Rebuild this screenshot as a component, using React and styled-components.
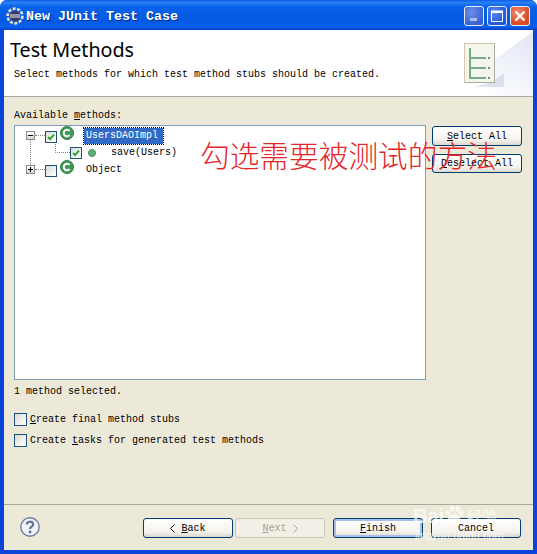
import React from 'react';
import styled, { createGlobalStyle } from 'styled-components';

const GlobalStyle = createGlobalStyle`
    html, body {
        margin: 0;
        padding: 0;
        background: #fff;
    }
`;

const Window = styled.div`
    position: relative;
    width: 537px;
    height: 554px;
    display: flex;
    flex-direction: column;
    overflow: hidden;
    box-sizing: border-box;
    padding: 0 4px 4px;
    background: #0a44d8;
    border-radius: 7px 7px 0 0;
    font-family: "Liberation Mono", monospace;
    font-size: 10px;
    color: #000;
`;

const TitleBar = styled.div`
    height: 30px;
    margin: 0 -4px;
    box-sizing: border-box;
    padding: 2px 7px 0 6px;
    flex: none;
    display: flex;
    align-items: center;
    gap: 2px;
    background: linear-gradient(180deg, #0a5be6 0%, #2a80f4 8%, #0a62ea 22%, #0458e2 70%, #0a62ee 88%, #0240cc 100%);
`;

const TitleText = styled.div`
    flex: 1;
    color: #fff;
    font-weight: bold;
    font-size: 13.33px;
    text-shadow: 1px 1px 0 #0a2a90;
`;

const WinButtons = styled.div`
    display: flex;
    gap: 3px;
`;

const WinButton = styled.div`
    width: 20px;
    height: 20px;
    box-sizing: border-box;
    border: 1px solid #e8eefc;
    border-radius: 3px;
    display: flex;
    align-items: center;
    justify-content: center;
    background: ${p => p.$close
        ? 'radial-gradient(circle at 35% 30%, #ee8a6c, #d84a24 70%)'
        : p.$dim
            ? 'radial-gradient(circle at 35% 30%, #6e8ee6, #3560d4 75%)'
            : 'radial-gradient(circle at 35% 30%, #5a88f0, #1f56dc 75%)'};
`;

const Header = styled.div`
    position: relative;
    height: 67px;
    flex: none;
    box-sizing: border-box;
    padding: 8px 6px 0;
    background: #fff;
    border-bottom: 1px solid #a8a8a4;
`;

const HeaderSwoosh = styled.svg`
    position: absolute;
    right: 0;
    top: 0;
`;

const HeaderIcon = styled.svg`
    position: absolute;
    left: 456px;
    top: 13px;
`;

const Heading = styled.div`
    font-family: "Noto Sans", sans-serif;
    font-size: 19.7px;
    line-height: 24px;
    color: #000;
`;

const Subtitle = styled.div`
    margin: 6px 0 0 4px;
    line-height: 14px;
`;

const Body = styled.div`
    flex: 1;
    display: flex;
    flex-direction: column;
    background: #ece9d8;
    min-height: 0;
`;

const MainArea = styled.div`
    flex: 1;
    padding: 12px 11px 0 10px;
    display: flex;
    flex-direction: column;
`;

const FieldLabel = styled.div`
    height: 16px;
    line-height: 14px;
`;

const MethodsRow = styled.div`
    display: flex;
    gap: 6px;
`;

const TreeBox = styled.div`
    width: 412px;
    height: 255px;
    box-sizing: border-box;
    padding: 1px 0 0 11px;
    background: #fff;
    border: 1px solid #7f9db9;
`;

const TreeRow = styled.div`
    display: flex;
    align-items: center;
    height: 17px;
`;

const TreeLines = styled.svg`
    flex: none;
    display: block;
    overflow: visible;
`;

const Expander = styled.div`
    flex: none;
    position: relative;
    width: 9px;
    height: 9px;
    box-sizing: border-box;
    border: 1px solid #8c8c84;
    background: linear-gradient(180deg, #fff, #d8d4c8);
    &::before {
        content: '';
        position: absolute;
        left: 1px;
        right: 1px;
        top: 3px;
        height: 1px;
        background: #000;
    }
    &::after {
        content: '';
        display: ${p => (p.$plus ? 'block' : 'none')};
        position: absolute;
        top: 1px;
        bottom: 1px;
        left: 3px;
        width: 1px;
        background: #000;
    }
`;

const Dots = styled.div`
    flex: none;
    width: ${p => p.$w}px;
    border-top: 1px dotted #808080;
`;

const Check = styled.div`
    flex: none;
    width: ${p => p.$size || 12}px;
    height: ${p => p.$size || 12}px;
    margin-top: ${p => p.$top || 0}px;
    margin-right: ${p => p.$after || 0}px;
    box-sizing: border-box;
    border: 1px solid #1c5180;
    background: linear-gradient(135deg, #dcdcd4, #fff);
    display: flex;
    align-items: center;
    justify-content: center;
`;

const ClassGlyph = styled.svg`
    flex: none;
    margin-top: -5px;
`;

const MethodGlyph = styled.svg`
    flex: none;
`;

const NodeLabel = styled.span`
    margin-left: ${p => p.$gap}px;
    padding: 2px 5px 2px 2px;
    line-height: 12px;
    white-space: nowrap;
    color: ${p => (p.$selected ? '#fff' : '#000')};
    background: ${p => (p.$selected ? '#316ac5' : 'transparent')};
    outline: ${p => (p.$selected ? '1px dotted #000' : 'none')};
`;

const SideButtons = styled.div`
    display: flex;
    flex-direction: column;
    gap: 8px;
    padding-top: 1px;
`;

const Button = styled.div`
    width: 90px;
    height: ${p => p.$h || 20}px;
    box-sizing: border-box;
    display: flex;
    align-items: center;
    justify-content: center;
    gap: 6px;
    border-radius: 3px;
    border: 1px solid ${p => (p.$disabled ? '#c9c7ba' : '#003c74')};
    color: ${p => (p.$disabled ? '#a1a192' : '#000')};
    background: ${p => (p.$disabled ? '#f2f0e6' : 'linear-gradient(180deg, #fff 0%, #f4f3ee 70%, #dcd8ce 100%)')};
    box-shadow: ${p => (p.$default ? 'inset 0 0 0 2px #a8bde8' : 'none')};
`;

const StatusText = styled.div`
    margin-top: 5px;
    line-height: 14px;
`;

const Options = styled.div`
    margin-top: 14px;
    display: flex;
    flex-direction: column;
    gap: 8px;
`;

const Option = styled.label`
    display: flex;
    align-items: center;
    gap: 3px;
    height: 13px;
`;

const Footer = styled.div`
    flex: none;
    height: 46px;
    box-sizing: border-box;
    border-top: 1px solid #aca899;
    padding: 13px 12px 0 16px;
    display: flex;
    align-items: flex-start;
`;

const HelpIcon = styled.svg`
    flex: none;
    display: block;
    margin-top: -1px;
`;

const NavButtons = styled.div`
    margin-left: 103px;
    display: flex;
    gap: 2px;
`;

const LastButtons = styled.div`
    margin-left: 8px;
    display: flex;
    gap: 8px;
`;

const Annotation = styled.div`
    position: absolute;
    left: 200px;
    top: 137px;
    font-family: "Noto Sans CJK SC", sans-serif;
    font-weight: 300;
    font-size: 29.7px;
    line-height: 36px;
    white-space: nowrap;
    color: #e3262a;
`;

const Watermark = styled.div`
    position: absolute;
    left: 413px;
    top: 500px;
    width: 120px;
    color: rgba(255, 255, 255, 0.72);
    font-family: "Liberation Sans", sans-serif;
    font-weight: bold;
    pointer-events: none;
`;

const WatermarkLogo = styled.div`
    display: flex;
    align-items: center;
    font-size: 20px;
    line-height: 24px;
    padding-top: 4px;
`;

const WatermarkCn = styled.span`
    font-family: "Noto Sans CJK SC", sans-serif;
    font-weight: 400;
    font-size: 15px;
    margin-left: 3px;
`;

const WatermarkUrl = styled.div`
    margin: 1px 0 0 2px;
    font-size: 11px;
    font-weight: normal;
    white-space: nowrap;
`;

const EclipseIcon = () => (
    <svg width="18" height="18" viewBox="0 0 18 18">
        <circle cx="9" cy="9" r="7.4" fill="none" stroke="#e8e2d8" strokeWidth="2.6" strokeDasharray="3 1.6" />
        <circle cx="9" cy="9" r="5.2" fill="#3a3a5c" />
        <path d="M4 8h10M4 10h10" stroke="#f0f0f0" strokeWidth="1" />
    </svg>
);

const ClassIcon = () => (
    <ClassGlyph width="14" height="14" viewBox="0 0 14 14">
        <circle cx="7" cy="7" r="6.5" fill="#3f9a55" stroke="#2e7d46" />
        <path d="M9.6 4.9A3.3 3.3 0 1 0 9.6 9.1" fill="none" stroke="#fff" strokeWidth="2" />
    </ClassGlyph>
);

const MethodDot = () => (
    <MethodGlyph width="8" height="8" viewBox="0 0 8 8">
        <circle cx="4" cy="4" r="3.6" fill="#5fae78" stroke="#3f8f5a" strokeWidth="0.8" />
    </MethodGlyph>
);

const Tick = () => (
    <svg width="8" height="8" viewBox="0 0 8 8">
        <path d="M1 4l2 2.2L7 1.6" fill="none" stroke="#21a121" strokeWidth="1.8" />
    </svg>
);

const Chevron = ({ dir }) => (
    <svg width="5" height="9" viewBox="0 0 5 9">
        <path d={dir === 'left' ? 'M4.5 0.5L0.5 4.5L4.5 8.5' : 'M0.5 0.5L4.5 4.5L0.5 8.5'} fill="none" stroke="currentColor" />
    </svg>
);

const App = () => {
    return (
        <Window>
            <GlobalStyle />
            <TitleBar>
                <EclipseIcon />
                <TitleText>New JUnit Test Case</TitleText>
                <WinButtons>
                    <WinButton $dim>
                        <svg width="12" height="12" viewBox="0 0 12 12">
                            <rect x="2" y="8" width="7" height="3" fill="#a9bdf0" />
                        </svg>
                    </WinButton>
                    <WinButton>
                        <svg width="14" height="14" viewBox="0 0 14 14">
                            <path d="M1.5 3.5h11v9h-11z" fill="none" stroke="#fff" />
                            <rect x="1" y="1.5" width="12" height="2.5" fill="#fff" />
                        </svg>
                    </WinButton>
                    <WinButton $close>
                        <svg width="12" height="12" viewBox="0 0 12 12">
                            <path d="M1.5 1.5l9 9M10.5 1.5l-9 9" stroke="#fff" strokeWidth="2.2" />
                        </svg>
                    </WinButton>
                </WinButtons>
            </TitleBar>

            <Header>
                <HeaderSwoosh width="150" height="66" viewBox="0 0 150 66">
                    <defs>
                        <linearGradient id="swoosh" x1="0" y1="1" x2="1" y2="0">
                            <stop offset="0.25" stopColor="#fff" />
                            <stop offset="1" stopColor="#dfe5f3" />
                        </linearGradient>
                    </defs>
                    <path d="M60 66C85 50 110 30 150 2V66Z" fill="url(#swoosh)" />
                </HeaderSwoosh>
                <HeaderIcon width="44" height="44" viewBox="0 0 44 44">
                    <path d="M31 39.5L44 30V44H14Z" fill="#c8d0e2" opacity="0.6" />
                    <rect x="4.5" y="0.5" width="30" height="39" fill="#f4f6ee" stroke="#a8ac9c" />
                    <path d="M4.5 39.5V0.5H34.5" fill="none" stroke="#d6c8a8" />
                    <path d="M10 5V36M10 15H26M10 25H26M10 35H26" fill="none" stroke="#74ad86" strokeWidth="2" />
                    <path d="M28 15h3M28 25h3M28 35h3" fill="none" stroke="#5c9a78" strokeWidth="2" strokeDasharray="2 1" />
                </HeaderIcon>
                <Heading>Test Methods</Heading>
                <Subtitle>Select methods for which test method stubs should be created.</Subtitle>
            </Header>

            <Body>
                <MainArea>
                    <FieldLabel>Available <u>m</u>ethods:</FieldLabel>
                    <MethodsRow>
                        <TreeBox>
                            <TreeRow>
                                <Expander />
                                <Dots $w={10} />
                                <Check $top={3} $after={3}><Tick /></Check>
                                <ClassIcon />
                                <NodeLabel $gap={10} $selected>UsersDAOImpl</NodeLabel>
                            </TreeRow>
                            <TreeRow>
                                <TreeLines width="44" height="17" viewBox="0 0 44 17">
                                    <path d="M4.5 -4V21M29.5 0V8.5H44" fill="none" stroke="#808080" strokeDasharray="1 1" />
                                </TreeLines>
                                <Check $top={1} $after={6}><Tick /></Check>
                                <MethodDot />
                                <NodeLabel $gap={13}>save(Users)</NodeLabel>
                            </TreeRow>
                            <TreeRow>
                                <Expander $plus />
                                <Dots $w={10} />
                                <Check $top={3} $after={3} />
                                <ClassIcon />
                                <NodeLabel $gap={10}>Object</NodeLabel>
                            </TreeRow>
                        </TreeBox>
                        <SideButtons>
                            <Button><span><u>S</u>elect All</span></Button>
                            <Button $h={19}><span><u>D</u>eselect All</span></Button>
                        </SideButtons>
                    </MethodsRow>
                    <StatusText>1 method selected.</StatusText>
                    <Options>
                        <Option><Check $size={13} /><span><u>C</u>reate final method stubs</span></Option>
                        <Option><Check $size={13} /><span>Create <u>t</u>asks for generated test methods</span></Option>
                    </Options>
                </MainArea>
                <Footer>
                    <HelpIcon width="20" height="20" viewBox="0 0 20 20">
                        <circle cx="10" cy="10" r="9.2" fill="#f2f3f6" stroke="#6f80a6" strokeWidth="1.4" />
                        <path d="M6.8 7.6C6.8 3.8 13.2 3.8 13.2 7.4C13.2 9.6 10 9.6 10 12" fill="none" stroke="#5f7096" strokeWidth="2.2" />
                        <circle cx="10" cy="15" r="1.4" fill="#5f7096" />
                    </HelpIcon>
                    <NavButtons>
                        <Button><Chevron dir="left" /><span><u>B</u>ack</span></Button>
                        <Button $disabled><span><u>N</u>ext</span><Chevron dir="right" /></Button>
                    </NavButtons>
                    <LastButtons>
                        <Button $default><span><u>F</u>inish</span></Button>
                        <Button>Cancel</Button>
                    </LastButtons>
                </Footer>
            </Body>

            <Annotation>勾选需要被测试的方法</Annotation>
            <Watermark>
                <WatermarkLogo>
                    Bai
                    <svg width="20" height="24" viewBox="0 0 22 24">
                        <ellipse cx="11" cy="16" rx="7" ry="6" fill="currentColor" />
                        <ellipse cx="4" cy="9" rx="2.4" ry="3" fill="currentColor" />
                        <ellipse cx="9" cy="4" rx="2.4" ry="3" fill="currentColor" />
                        <ellipse cx="15" cy="4" rx="2.4" ry="3" fill="currentColor" />
                        <ellipse cx="19" cy="9" rx="2.4" ry="3" fill="currentColor" />
                    </svg>
                    <WatermarkCn>经验</WatermarkCn>
                </WatermarkLogo>
                <WatermarkUrl>jingyan.baidu.com</WatermarkUrl>
            </Watermark>
        </Window>
    );
};

export default App;
